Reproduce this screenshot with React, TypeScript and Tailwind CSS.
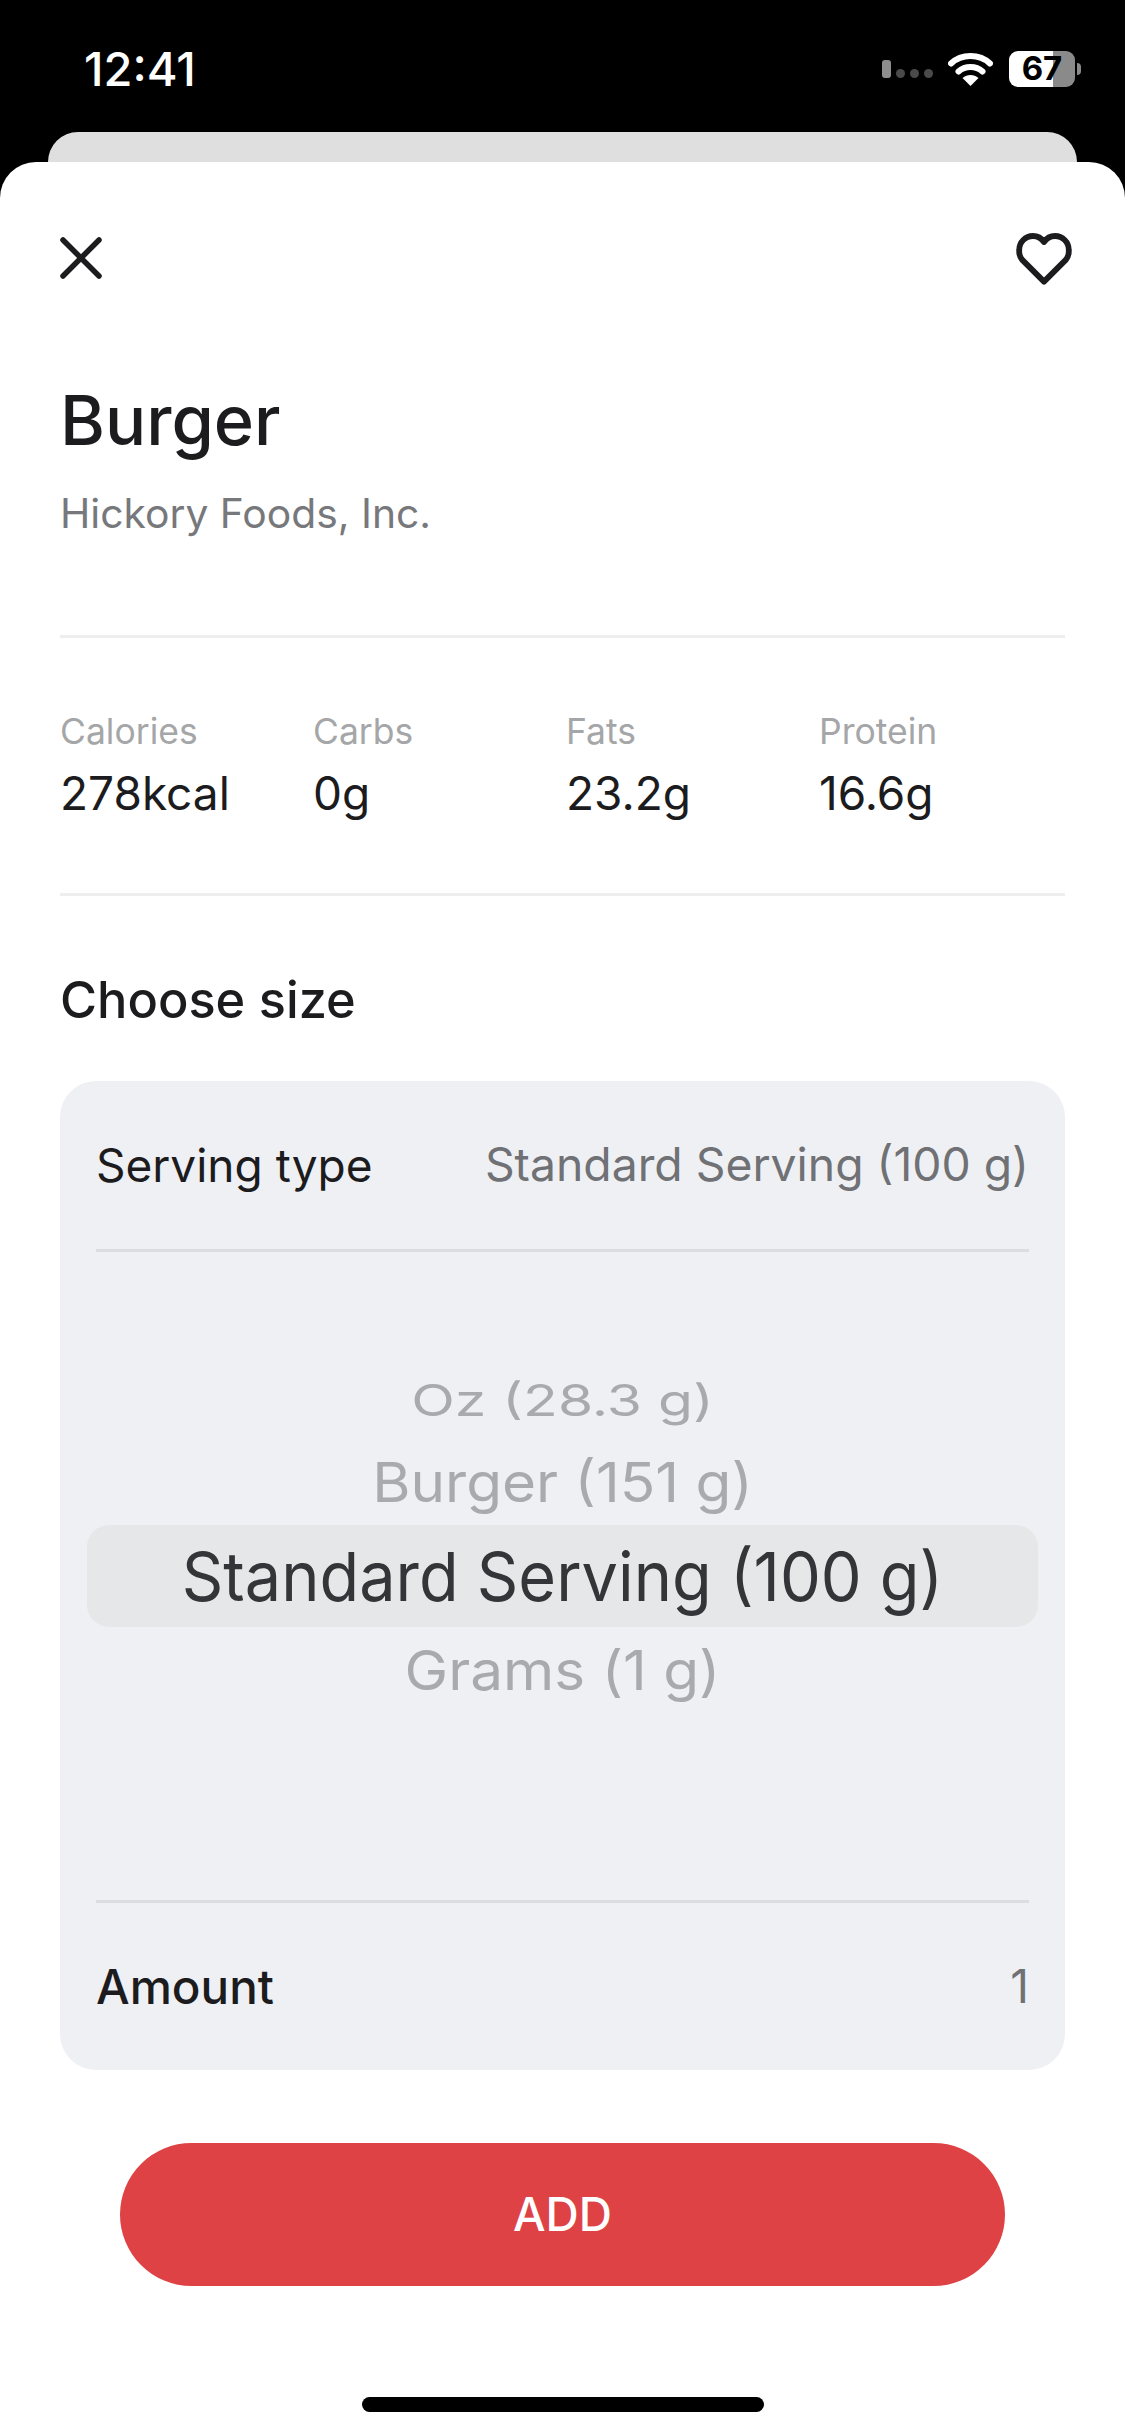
const font = { fontFamily: "Inter, 'Liberation Sans', sans-serif" };

const stats = [
  { label: "Calories", value: "278kcal" },
  { label: "Carbs", value: "0g" },
  { label: "Fats", value: "23.2g" },
  { label: "Protein", value: "16.6g" },
];

function SignalIcon() {
  return (
    <div className="flex items-end gap-[5px]">
      <div className="h-[18px] w-[9px] rounded-[3px] bg-[#8e8e8e]" />
      <div className="h-[9px] w-[9px] rounded-full bg-[#4a4a4a]" />
      <div className="h-[9px] w-[9px] rounded-full bg-[#4a4a4a]" />
      <div className="h-[9px] w-[9px] rounded-full bg-[#4a4a4a]" />
    </div>
  );
}

function WifiIcon() {
  return (
    <svg width="45" height="33" viewBox="0 0 45 33" fill="none">
      <path d="M3 10.500C13.500 0.500 31.500 0.500 42 10.500" stroke="#fff" strokeWidth="6" strokeLinecap="round" />
      <path d="M10.500 18.500C17 12.500 28 12.500 34.500 18.500" stroke="#fff" strokeWidth="6" strokeLinecap="round" />
      <path d="M22.500 33L14.500 25C19 21 26 21 30.500 25L22.500 33Z" fill="#fff" />
    </svg>
  );
}

function CloseIcon() {
  return (
    <svg width="42" height="42" viewBox="0 0 42 42" fill="none">
      <path d="M3 3L39 39M39 3L3 39" stroke="#1c1c1e" strokeWidth="5.500" strokeLinecap="round" />
    </svg>
  );
}

function HeartIcon() {
  return (
    <svg width="66" height="66" viewBox="0 0 24 24" fill="none" stroke="#1c1c1e" strokeWidth="2.100" strokeLinejoin="round" strokeLinecap="round">
      <path d="M12 20.600 4 12.600A5.200 5.200 0 0 1 3 9 5 5 0 0 1 8 4c1.700 0 3 .7 4 2.200C13 4.700 14.300 4 16 4a5 5 0 0 1 5 5 5.200 5.200 0 0 1-1 3.600Z" />
    </svg>
  );
}

export default function App() {
  return (
    <div className="flex h-[2436px] w-[1125px] flex-col overflow-hidden bg-black" style={font}>
      {/* Status bar */}
      <div className="flex h-[132px] items-start justify-between pt-[43px] pl-[84px] pr-[44px]">
        <div className="flex h-[52px] items-center text-[47px] font-medium text-white">12:41</div>
        <div className="flex h-[52px] items-center">
          <SignalIcon />
          <div className="ml-[15px]">
            <WifiIcon />
          </div>
          <div className="ml-[16px] flex h-[36px] w-[66px] items-center justify-center rounded-[9px] bg-[linear-gradient(90deg,#fff_67%,#8a8a8a_67%)] text-[33px] font-bold text-black">
            67
          </div>
          <div className="ml-[2px] h-[12px] w-[4px] rounded-r-full bg-[#8a8a8a]" />
        </div>
      </div>

      {/* Card behind the sheet */}
      <div className="mx-[48px] h-[30px] rounded-t-[30px] bg-[#dfdfdf]" />

      {/* Sheet */}
      <div className="flex flex-1 flex-col rounded-t-[36px] bg-white">
        <div className="flex h-[129px] items-end justify-between pl-[60px] pr-[48px]">
          <div className="flex h-[66px] items-center">
            <CloseIcon />
          </div>
          <HeartIcon />
        </div>

        <div className="flex flex-col px-[60px]">
          <h1 className="mt-[90px] text-[68.5px] leading-[80px] font-medium text-[#1c1c1e]">Burger</h1>
          <p className="mt-[27px] text-[40.8px] leading-[50px] text-[#77787b]">Hickory Foods, Inc.</p>
          <div className="mt-[97px] h-[3px] bg-[#eeeeee]" />

          <div className="mt-[73px] grid grid-cols-[253px_253px_253px_1fr]">
            {stats.map((s) => (
              <div key={s.label} className="flex flex-col">
                <span className="text-[35.5px] leading-[42px] text-[#a5a6a8]">{s.label}</span>
                <span className="mt-[12px] text-[46px] leading-[56px] text-[#1c1c1e]">{s.value}</span>
              </div>
            ))}
          </div>
          <div className="mt-[72px] h-[3px] bg-[#eeeeee]" />

          <h2 className="mt-[74px] text-[50.5px] leading-[60px] font-medium text-[#1c1c1e]">Choose size</h2>

          {/* Size card */}
          <div className="mt-[51px] flex h-[989px] flex-col rounded-[36px] bg-[#eff0f4] px-[36px]">
            <div className="flex h-[168px] shrink-0 items-center justify-between">
              <span className="text-[46px] text-[#1c1c1e]">Serving type</span>
              <span className="text-[46.3px] text-[#707175]">Standard Serving (100 g)</span>
            </div>
            <div className="h-[3px] shrink-0 bg-[#dcdde1]" />

            {/* Wheel picker */}
            <div className="flex h-[648px] shrink-0 flex-col items-center pt-[124px]">
              <div className="flex h-[50px] scale-y-[0.77] items-center text-[57px] text-[#a9aaad]">Oz (28.3 g)</div>
              <div className="mt-[26px] flex h-[60px] scale-y-[0.94] items-center text-[58.5px] text-[#a9aaad]">Burger (151 g)</div>
              <div className="mt-[13px] -mx-[9px] flex h-[102px] items-center justify-center self-stretch rounded-[22px] bg-[#e6e7e9] pt-[2px] text-[#333538]">
                <span className="scale-y-[1.05] text-[64.8px]">Standard Serving (100 g)</span>
              </div>
              <div className="mt-[13px] flex h-[60px] scale-y-[0.94] items-center text-[58.5px] text-[#a9aaad]">Grams (1 g)</div>
            </div>
            <div className="h-[3px] shrink-0 bg-[#dcdde1]" />

            <div className="flex flex-1 items-center justify-between">
              <span className="text-[47.5px] font-medium text-[#1c1c1e]">Amount</span>
              <span className="text-[46px] text-[#707175]">1</span>
            </div>
          </div>

          <button className="mx-[60px] mt-[73px] flex h-[143px] items-center justify-center rounded-full bg-[#de4245] text-[46px] font-medium text-white">
            ADD
          </button>
        </div>

        <div className="mx-auto mt-[111px] h-[15px] w-[402px] rounded-full bg-black" />
      </div>
    </div>
  );
}
